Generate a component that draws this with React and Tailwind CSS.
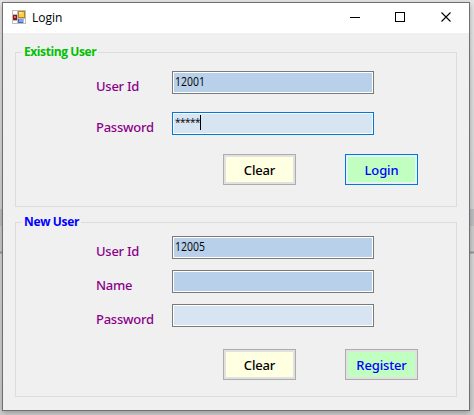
const ui = "font-['Open_Sans','Noto_Sans',sans-serif]";

function Label({ children }) {
  return (
    <span className="mt-[6px] block w-[76px] shrink-0 font-['Noto_Sans',sans-serif] text-[13px] leading-[18px] font-medium tracking-[-0.25px] whitespace-nowrap text-[#8b008b]">
      {children}
    </span>
  );
}

function Field({ label, value, pale, focused }) {
  return (
    <div className="flex h-[23px]">
      <Label>{label}</Label>
      <div className={`h-[23px] w-[202px] border p-px ${focused ? "border-[#0078d7]" : "border-[#7a7a7a]"} bg-white`}>
        <div className={`flex h-full pl-px ${pale ? "bg-[#d7e4f2]" : "bg-[#b9d0eb]"}`}>
          {value && (
            <span className={`block w-[25px] origin-left text-black ${focused ? "text-[10px] leading-[17px] tracking-[-0.5px]" : "scale-x-[0.87] text-[12px] leading-[18px]"}`}>
              {value}
            </span>
          )}
          {focused && <span className="mt-px h-[15px] w-px bg-black" />}
        </div>
      </div>
    </div>
  );
}

function Button({ children, look, text }) {
  return (
    <div className={`h-[31px] w-[73px] border p-[2px] ${look}`}>
      <div className={`flex h-full items-center justify-center pt-px font-['Noto_Sans',sans-serif] text-[13px] leading-[18px] font-medium tracking-[-0.15px] ${text}`}>{children}</div>
    </div>
  );
}

function Group({ title, color, className, children }) {
  return (
    <div className={`relative w-[442px] border border-[#dcdcdc] ${className}`}>
      <span className={`absolute -top-[10px] left-[6px] bg-[#f0f0f0] px-[2px] text-[12px] leading-[18px] font-bold whitespace-nowrap ${color}`}>
        {title}
      </span>
      {children}
    </div>
  );
}

const clear = "border-[#adadad] bg-[#e1e1e1]";

export default function App() {
  return (
    <div className={`h-[415px] w-[474px] overflow-hidden bg-[linear-gradient(#e8e8e8_0px,#d8d8d8_209px,#c2c2c4_209px,#c2c2c4_226px,#d0d0d0_226px,#d0d0d0_251px,#999_252px,#999_253px,#dadada_254px,#d2d2d2_415px)] pt-[2px] pl-[2px] ${ui}`}>
      <div className="h-[409px] w-[468px] border border-[#707070] bg-[#f0f0f0] shadow-[0_2px_6px_rgba(0,0,0,0.3)]">
        <div className="flex h-[30px] items-center bg-white pl-[9px]">
          <svg className="mt-[7px] self-start" width="14" height="14" viewBox="0 0 14 14" shapeRendering="crispEdges">
            <rect width="14" height="14" fill="#bdbdbd" />
            <path d="M1 1h4v3H1zM1 11h4v2H1zM12 9h1v4h-1z" fill="#fff" />
            <rect x="6" y="1" width="7" height="7" fill="#b5851c" />
            <rect x="7" y="2" width="5" height="5" fill="#ffcd42" />
            <rect x="7" y="2" width="3" height="2" fill="#ffe391" />
            <rect x="1" y="5" width="4" height="5" fill="#8d1712" />
            <rect x="2" y="6" width="2" height="2" fill="#dc6b5d" />
            <rect x="6" y="9" width="5" height="4" fill="#3869cb" />
            <rect x="7" y="9" width="4" height="3" fill="#79a6f2" />
          </svg>
          <span className="ml-[6px] text-[12px] leading-[16px] text-black">Login</span>
          <svg className="mr-[16px] ml-auto" width="103" height="12" viewBox="0 1 103 12" fill="none" stroke="#000">
            <path d="M0 6.5h10M45.5 1.5h9v9h-9z" shapeRendering="crispEdges" />
            <path d="M91.5 1.5l9 9M100.5 1.5l-9 9" strokeWidth="1.1" />
          </svg>
        </div>
        <div className="flex flex-col gap-[15px] pt-[19px] pl-[12px]">
          <Group title="Existing User" color="text-[#00c000] tracking-[-0.4px]" className="h-[155px]">
            <div className="flex flex-col gap-[18px] pt-[18px] pl-[80px]">
              <Field label="User Id" value="12001" />
              <Field label="Password" value="*****" pale focused />
            </div>
            <div className="mt-[19px] flex gap-[49px] pl-[207px]">
              <Button look={clear} text="bg-[#ffffe1] text-black">Clear</Button>
              <Button look="border-[#0078d7] bg-[#e5f1fb]" text="bg-[#c0ffc0] text-[#0000ff]">Login</Button>
            </div>
          </Group>
          <Group title="New User" color="text-[#0000ff] tracking-[-0.35px]" className="h-[175px]">
            <div className="flex flex-col gap-[11px] pt-[13px] pl-[80px]">
              <Field label="User Id" value="12005" />
              <Field label="Name" />
              <Field label="Password" pale />
            </div>
            <div className="mt-[22px] flex gap-[49px] pl-[207px]">
              <Button look={clear} text="bg-[#ffffe1] text-black">Clear</Button>
              <Button look={clear} text="bg-[#c0ffc0] text-[#0000ff]">Register</Button>
            </div>
          </Group>
        </div>
      </div>
    </div>
  );
}
